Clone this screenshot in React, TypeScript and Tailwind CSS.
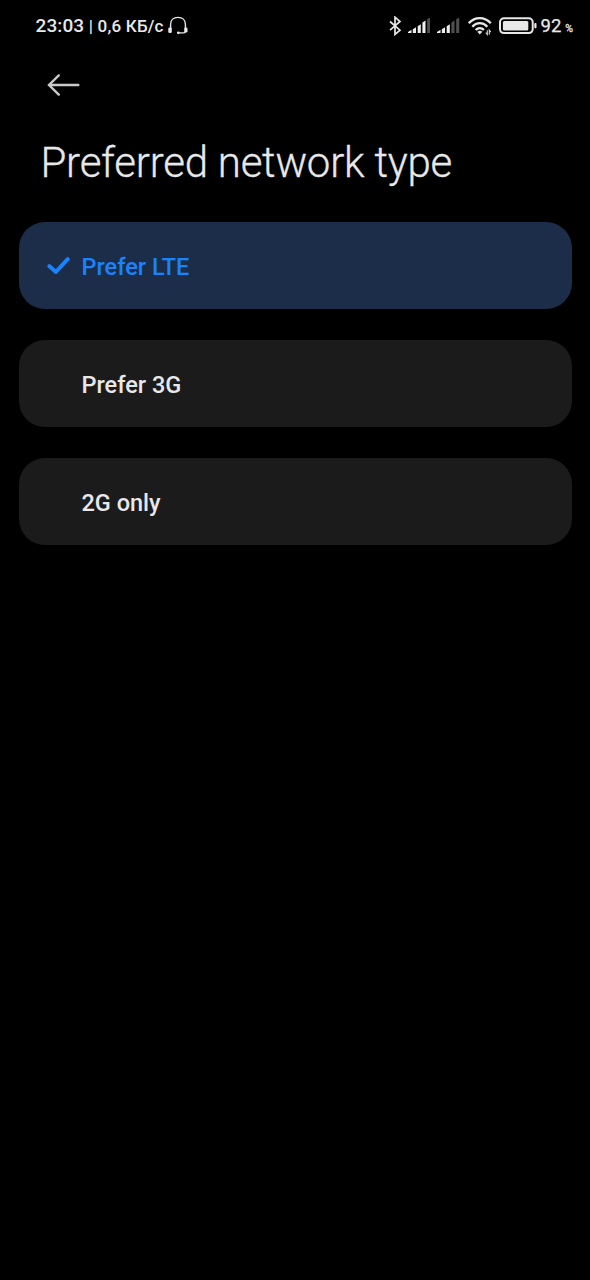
import React from "react";

const options = [
  { label: "Prefer LTE", selected: true },
  { label: "Prefer 3G", selected: false },
  { label: "2G only", selected: false },
];

function Headset() {
  return (
    <svg width="20" height="20" viewBox="0 0 20 20" fill="none" className="ml-1 shrink-0">
      <path d="M2.600 13V8.300C2.600 4.100 5.600 1.400 10 1.400s7.400 2.700 7.400 6.900V13" stroke="#e8e8e8" strokeWidth="1.400" />
      <rect x="0.300" y="11.500" width="3.500" height="5.500" rx="1.300" fill="#e8e8e8" />
      <rect x="16.200" y="11.500" width="3.300" height="5" rx="1.300" fill="#e8e8e8" />
      <path d="M17.400 15.500c0 .9-.5 1.300-1.300 1.300H10.500" stroke="#e8e8e8" strokeWidth="1.200" />
      <circle cx="10.300" cy="16.800" r="1.400" fill="#e8e8e8" />
    </svg>
  );
}

function Bluetooth() {
  return (
    <svg width="12" height="20" viewBox="0 0 12 20" fill="none" className="shrink-0">
      <path d="M1 5.500L11 14.200L6 18.400V1.200L11 5.500L1 14.200" stroke="#e8e8e8" strokeWidth="1.700" />
    </svg>
  );
}

function Signal({ level }: { level: number }) {
  const bars = [
    "M0 17V16L3.500 13.800V17Z",
    "M4.800 17V13.200L8 11.200V17Z",
    "M9.700 17V10.300L12.800 8.200V17Z",
    "M14.400 17V6.500L17.500 4.600V17Z",
    "M19.200 17V3.200L22.200 1.500V17Z",
  ];
  return (
    <svg width="22.500" height="20" viewBox="0 0 22.500 20" className="shrink-0">
      {bars.map((d, i) => (
        <path key={d} d={d} fill={i < level ? "#eeeeee" : "#505050"} />
      ))}
    </svg>
  );
}

function Wifi() {
  return (
    <svg width="24" height="20" viewBox="0 0 24 20" fill="none" className="shrink-0">
      <g stroke="#e8e8e8" strokeWidth="2.300">
        <path d="M.8 7.200C7 .3 16.600.3 22.800 7.200" />
        <path d="M4.300 10.700C8.500 6 15.100 6 19.300 10.700" />
        <path d="M7.700 14C10 11.400 13.600 11.400 15.900 14" />
      </g>
      <path d="M9.300 15.700Q11.800 13.700 14.300 15.700L11.800 18.500Z" fill="#e8e8e8" />
      <path d="M19.300 14.200V18.600L17.800 16.700M21.300 18.800V14.200L22.800 16.200" stroke="#d4d4d4" strokeWidth="1.100" />
    </svg>
  );
}

function Battery() {
  return (
    <svg width="38" height="20" viewBox="0 0 38 20" fill="none" className="shrink-0">
      <rect x="1" y="2.300" width="32.700" height="14.800" rx="4" stroke="#e8e8e8" strokeWidth="2" />
      <rect x="3.900" y="5" width="25.400" height="9.600" rx="1.500" fill="#e8e8e8" />
      <rect x="35.300" y="7.100" width="2.200" height="5.200" rx=".8" fill="#e8e8e8" />
    </svg>
  );
}

export default function App() {
  return (
    <main className="min-h-screen w-full bg-black font-[Roboto,sans-serif] text-[#e8e8e8]">
      <header className="flex h-[52px] items-center pr-[17px] pl-[35.500px]">
        <span className="text-[19px] leading-5 font-medium tracking-[0.100px] whitespace-nowrap">23:03</span>
        <span className="ml-[4.500px] text-[17px] leading-5 font-medium tracking-[0.200px] whitespace-nowrap">| 0,6 КБ/с</span>
        <Headset />
        <div className="ml-auto flex items-center">
          <Bluetooth />
          <div className="ml-[7px] flex gap-[7px]">
            <Signal level={4} />
            <Signal level={3} />
          </div>
          <div className="ml-[8px] flex gap-[7px]">
            <Wifi />
            <Battery />
          </div>
          <span className="ml-[4px] text-[18.500px] leading-5 [-webkit-text-stroke:0.250px_#e8e8e8]">92</span>
          <span className="mt-[6px] ml-[4px] text-[10.500px] leading-3 [-webkit-text-stroke:0.300px_#e8e8e8]">%</span>
        </div>
      </header>

      <nav className="flex h-[66px] items-center pl-[47px]">
        <button aria-label="Back">
          <svg width="33" height="24" viewBox="0 0 33 24" fill="none" stroke="#c9c9c9" strokeWidth="2.400" strokeLinecap="round">
            <path d="M31.300 12H2M11.800 2.400L2 12L11.800 21.600" />
          </svg>
        </button>
      </nav>

      <h1 className="pt-[20px] pl-[40.500px] text-[42px] leading-[50px] font-light tracking-[-0.240px] whitespace-nowrap [-webkit-text-stroke:0.300px_#e8e8e8]">
        Preferred network type
      </h1>

      <ul className="flex flex-col gap-[31px] pt-[34px] pr-[18px] pl-[19px]">
        {options.map((o) => (
          <li
            key={o.label}
            className={`flex h-[87px] items-center rounded-[26px] pt-[3px] pl-[28px] ${o.selected ? "bg-[#1b2d48] text-[#1a83fb]" : "bg-[#1b1b1b]"}`}
          >
            <span className="mr-[10.500px] flex w-[24px]">
              {o.selected && (
                <svg width="24" height="22" viewBox="0 0 24 22" fill="none" stroke="#1a83fb" strokeWidth="4" strokeLinecap="round" strokeLinejoin="round">
                  <path d="M2.400 10.200L8.900 16L20.700 3.200" />
                </svg>
              )}
            </span>
            <span className="text-[23.500px] leading-7 font-medium whitespace-nowrap">{o.label}</span>
          </li>
        ))}
      </ul>
    </main>
  );
}
